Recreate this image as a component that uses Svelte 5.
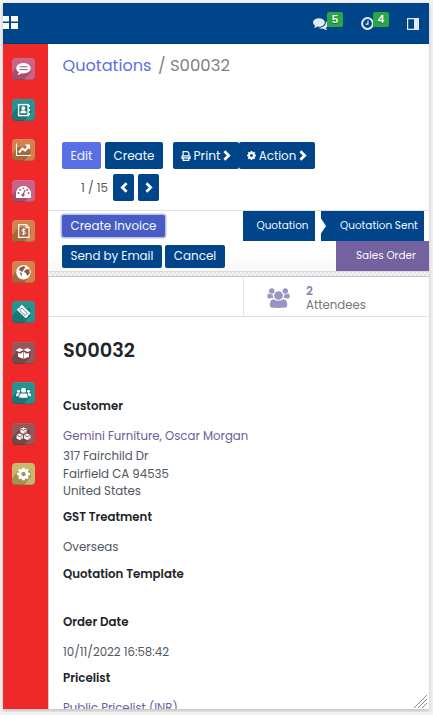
<script>
  // Sizes a label's type so that it takes up the given width.
  function fit(node, width) {
    const natural = node.getBoundingClientRect().width;
    const size = parseFloat(getComputedStyle(node).fontSize);
    node.style.fontSize = `${(size * width) / natural}px`;
  }

  const apps = [
    ['chat', 'pink'],
    ['contacts', 'teal'],
    ['chart', 'orange'],
    ['gauge', 'pink'],
    ['invoice', 'orange'],
    ['globe', 'orange'],
    ['ticket', 'teal'],
    ['box', 'plum'],
    ['people', 'teal'],
    ['cubes', 'plum'],
    ['gear', 'olive'],
  ];
  const gear =
    'M1152 896q0-106-75-181t-181-75-181 75-75 181 75 181 181 75 181-75 75-181zm512-109v222q0 12-8 23t-20 13l-185 28q-19 54-39 91 35 50 107 138 10 12 10 25t-9 23q-27 37-99 108t-94 71q-12 0-26-9l-138-108q-44 23-91 38-16 136-29 186-7 28-36 28h-222q-14 0-24.500-8.500t-11.500-21.500l-28-184q-49-16-90-37l-141 107q-10 9-25 9-14 0-25-11-126-114-165-168-7-10-7-23 0-12 8-23 15-21 51-66.500t54-70.500q-27-50-41-99l-183-27q-13-2-21-12.500t-8-23.500v-222q0-12 8-23t19-13l186-28q14-46 39-92-40-57-107-138-10-12-10-24 0-10 9-23 26-36 98.500-107.500t94.500-71.500q13 0 26 10l138 107q44-23 91-38 16-136 29-186 7-28 36-28h222q14 0 24.500 8.500t11.500 21.500l28 184q49 16 90 37l142-107q9-9 24-9 13 0 25 10 129 119 165 170 7 8 7 22 0 12-8 23-15 21-51 66.500t-54 70.500q26 50 41 98l183 28q13 2 21 12.500t8 23.500z';
  const comments =
    'M1408 768q0 139-94 257t-256.500 186.500-353.500 68.500q-86 0-176-16-124 88-278 128-36 9-86 16h-3q-11 0-20.500-8t-11.500-21q-1-3-1-6.500t.5-6.500 2-6l2.500-5 3.500-5.500 4-5 4.500-5 4-4.500q5-6 23-25t26-29.500 22.500-29 25-38.500 20.500-44q-124-72-195-177t-71-224q0-139 94-257t256.500-186.500 353.500-68.500 353.500 68.500 256.500 186.500 94 257zm384 256q0 120-71 224.500t-195 176.500q10 24 20.500 44t25 38.500 22.500 29 26 29.500 23 25q1 1 4 4.500t4.500 5 4 5 3.500 5.500l2.500 5 2 6 .5 6.500-1 6.500q-3 14-13 22t-22 7q-50-7-86-16-154-40-278-128-90 16-176 16-271 0-472-132 58 4 88 4 161 0 309-45t264-129q125-92 192-212t67-254q0-77-23-152 129 71 204 178t75 230z';
</script>

{#snippet chevron(left)}
  <svg class="chev" width="8" height="11" viewBox="0 0 8 11"><path d={left ? 'M6.600 1.200 2.300 5.500 6.600 9.800' : 'M1.400 1.200 5.700 5.500 1.400 9.800'} fill="none" stroke="#fff" stroke-width="2.700" /></svg>
{/snippet}

{#snippet glyph(name)}
  <svg width="23" height="22" viewBox="0 0 23 22" fill="#fff">
    <path d="M0 15 6 8 18 7 19 14 12 22H4Q0 22 0 18Z" fill="#000" opacity=".2" />
    {#if name === 'chat'}
      <path d="M11.500 5C7.500 5 4.300 7.300 4.300 10.200c0 1.700 1 3.200 2.700 4.100-.2 1-.8 1.800-1.700 2.400 1.800 0 3.300-.6 4.300-1.500q.9.200 1.900.2c4 0 7.200-2.300 7.200-5.200S15.500 5 11.500 5z" />
      <path d="M7.500 8.800h8M7.500 11.500h8" stroke="#a55374" stroke-width="1.100" />
    {:else if name === 'contacts'}
      <rect x="6.600" y="5.600" width="9.500" height="11" fill="none" stroke="#fff" stroke-width="1.400" />
      <circle cx="11.300" cy="9.200" r="1.900" /><path d="M8.200 14.200c0-2 1.200-3 3.100-3s3.100 1 3.100 3z" />
      <path d="M17.400 6v2M17.400 10v2M17.400 14v2" stroke="#fff" stroke-width="1.200" />
    {:else if name === 'chart'}
      <path d="M4.500 4.500v12h14.500" fill="none" stroke="#fff" stroke-width="1.100" />
      <path d="m7 13.500 3.500-4 2.500 2 3-3.400" fill="none" stroke="#fff" stroke-width="2" /><path d="M12.800 5.500h5.200v5.200z" />
    {:else if name === 'gauge'}
      <path d="M4 17v-3.500a7.500 7.500 0 0 1 15 0V17q0 1-1 1H5q-1 0-1-1z" />
      <path d="m11 15 2-5" stroke="#9b4b70" stroke-width="1.100" /><g fill="#9b4b70"><circle cx="11" cy="15" r="1.600" /><circle cx="6.500" cy="13" r=".9" /><circle cx="8" cy="9.900" r=".9" /><circle cx="11.500" cy="8.300" r=".8" /><circle cx="15.200" cy="9.900" r=".9" /><circle cx="16.600" cy="13" r=".9" /></g>
    {:else if name === 'invoice'}
      <path d="M6.700 4.600h7.500l2.800 2.800v9.900H6.700zM14 4.600v3h3" fill="none" stroke="#fff" stroke-width="1.200" />
      <path d="M13.600 9.300H11.200q-1.200 0-1.200 1.100t1.200 1.100h1q1.300 0 1.300 1.200T12.200 14H9.700M11.700 8.200v7" fill="none" stroke="#fff" stroke-width="1" />
    {:else if name === 'globe'}
      <circle cx="11.500" cy="11.300" r="7.300" />
      <path d="M8 6.500 12 5l1.500 1.500-1.800 1.700-.7 2.200-1.800.2-2.400-1.800zM13.500 8.500l4-.3.2 4-2.500 2.800-1.300-3-2-1zM7.500 11l2.500 1.200-.5 3.200z" fill="#8c5939" />
    {:else if name === 'ticket'}
      <path d="m9.800 3.800 8.900 8.500-1.200 1.300q-1.500.2-1.700 1.700l-2 2L4.700 8.800l1.600-1.600q1.700-.2 1.800-1.800z" />
      <path d="m9.800 7 5.600 5.300-2.200 2.300L7.600 9.300z" fill="none" stroke="#23736f" stroke-width=".8" />
    {:else if name === 'box'}
      <path d="m7.500 6 4 1.700L15.500 6l3.700 2.200-3.500 1.800-4.200-1.900-4.200 1.900-3.500-1.800zM6 11l2.300.7 2.900-1.900v7L6 14.700zM17 11l-2.300.7-2.900-1.900v7l5.200-2.100z" />
    {:else if name === 'people'}
      <circle cx="11.500" cy="8.200" r="2.500" /><path d="M7.400 15.700v-1.500q0-3 2.500-3 1.600 1 3.200 0 2.500 0 2.500 3v1.500z" />
      <circle cx="6.500" cy="9.300" r="1.500" /><circle cx="16.500" cy="9.300" r="1.500" /><path d="M4 14.300V13q0-2 2-2h1.500q-1 1-1 3.300zM19 14.300V13q0-2-2-2h-1.500q1 1 1 3.300z" />
    {:else if name === 'cubes'}
      <path d="m11.500 4.500 3 1.300v3.600l-3 1.400-3-1.400V5.800zM7.700 10.600l3.200 1.400v3.500L7.700 17l-3.100-1.500V12zM15.300 10.600l3.200 1.400v3.500L15.300 17l-3.200-1.500V12z" />
      <path d="m9 6.300 2.500 1 2.500-1M5.200 12.500l2.500 1 2.500-1M12.800 12.500l2.500 1 2.500-1M13 8.500v1.400M9.300 14.500v1.300M16.900 14.500v1.300" fill="none" stroke="#764547" stroke-width=".9" />
    {:else}
      <svg x="5" y="4.500" width="13" height="13" viewBox="128 128 1536 1536"><path d={gear} /></svg>
    {/if}
  </svg>
{/snippet}

<div class="window">
  <header>
    <svg class="grid" width="15" height="13"><path d="M0 0h6v5.600H0zM8 0h7v5.600H8zM0 7h6v6H0zM8 7h7v6H8z" fill="#fff" /></svg>
    <div class="tray">
      <svg width="15" height="15" viewBox="0 0 1792 1792"><path d={comments} fill="#e2eaf3" /></svg><b class="badge">5</b>
      <svg class="clock" width="13" height="13" viewBox="0 0 13 13"><circle cx="6.500" cy="6.500" r="5.400" fill="none" stroke="#e2eaf3" stroke-width="2" /><path d="M7 3.500v3.700H4.500" fill="none" stroke="#e2eaf3" stroke-width="1.200" /></svg><b class="badge">4</b>
      <svg class="panel" width="12" height="12"><path d="M.6.600h10.800v10.800H.6z" fill="none" stroke="#e2eaf3" stroke-width="1.200" /><path d="M7 0h5v12H7z" fill="#e2eaf3" /></svg>
    </div>
  </header>
  <div class="body">
    <nav>
      {#each apps as [name, tone]}
        <div class="app {tone}">{@render glyph(name)}</div>
      {/each}
    </nav>
    <main>
      <h2 class="crumbs"><a><span use:fit={89}>Quotations</span></a><i>/</i><span use:fit={60}>S00032</span></h2>
      <div class="toolbar">
        <button class="btn edit"><span use:fit={22}>Edit</span></button>
        <button class="btn create"><span use:fit={41}>Create</span></button>
        <button class="btn print"><svg width="10" height="10" viewBox="0 0 10 10"><path d="M2.100 5V.6h4.400l1.400 1.400v3M1 8V5.500q0-.6.700-.6h6.600q.7 0 .7.600V8M2.200 6.900h5.600v2.500H2.200z" fill="none" stroke="#fff" stroke-width="1.200" /></svg><span use:fit={27}>Print</span>{@render chevron(false)}</button>
        <button class="btn action"><svg width="9" height="9" viewBox="128 128 1536 1536"><path d={gear} fill="#fff" /></svg><span use:fit={37.5}>Action</span>{@render chevron(false)}</button>
      </div>
      <div class="pager"><span class="count"><span use:fit={27}>1 / 15</span></span><button class="btn arrow">{@render chevron(true)}</button><button class="btn arrow">{@render chevron(false)}</button></div>
      <section class="status">
        <div class="actions">
          <button class="btn invoice"><span use:fit={86}>Create Invoice</span></button>
          <div class="pair"><button class="btn email"><span use:fit={83}>Send by Email</span></button><button class="btn cancel"><span use:fit={42.500}>Cancel</span></button></div>
        </div>
        <div class="stages">
          <div class="line"><div class="stage first"><span use:fit={52}>Quotation</span></div><div class="stage sent"><span use:fit={78}>Quotation Sent</span></div></div>
          <div class="stage order"><span use:fit={60}>Sales Order</span></div>
        </div>
      </section>
      <div class="strip"></div>
      <div class="lower">
        <div class="stats">
          <div class="stat">
            <svg width="23" height="20" viewBox="0 0 23 20" fill="#9894c3"><circle cx="11.500" cy="7.500" r="4.300" /><circle cx="4.700" cy="3" r="2.700" /><circle cx="18.300" cy="3" r="2.700" /><path d="M4 19.500q-1.500-.6-1.200-3.200.4-4.800 3.900-5 4.800 3 9.600 0 3.500.2 3.900 5 .3 2.600-1.200 3.200-7.500.8-15 0zM.6 10q-.8-3.500.8-4.400 1.700 1 4.300.8-.2 2 .8 3.600H4.200Q2 11 .6 10zM22.400 10q.8-3.500-.8-4.400-1.700 1-4.300.8.200 2-.8 3.600h2.300q2.200 1 3.600 0z" /></svg>
            <div class="figure"><b>2</b><div><span use:fit={60}>Attendees</span></div></div>
          </div>
        </div>
        <article>
          <h1><span use:fit={72}>S00032</span></h1>
          <h3><span use:fit={60}>Customer</span></h3>
          <p class="link"><span use:fit={185.500}>Gemini Furniture, Oscar Morgan</span></p>
          <address><div><span use:fit={85.500}>317 Fairchild Dr</span></div><div><span use:fit={106}>Fairfield CA 94535</span></div><div><span use:fit={78}>United States</span></div></address>
          <h3 class="gst"><span use:fit={89}>GST Treatment</span></h3>
          <p><span use:fit={55.500}>Overseas</span></p>
          <h3 class="template"><span use:fit={121}>Quotation Template</span></h3>
          <h3 class="date"><span use:fit={65.500}>Order Date</span></h3>
          <p><span use:fit={106}>10/11/2022 16:58:42</span></p>
          <h3 class="price"><span use:fit={47.500}>Pricelist</span></h3>
          <p class="link"><span use:fit={115}>Public Pricelist (INR)</span></p>
        </article>
      </div>
      <svg class="grip" width="14" height="14"><path d="M0 13 13 0M4 13l9-9M8 13l5-5" stroke="#888" /></svg>
    </main>
  </div>
</div>

<style>
  :global(body) { background: #f1f1f1; }
  :global(#app) { display: flow-root; }
  .window { width: 426px; height: 706px; margin: 3px; overflow: hidden; background: #fff; box-shadow: 0 2px 4px #0003; font: 12px/18px Poppins, Inter, sans-serif; color: #50575e; display: flex; flex-direction: column; }
  span { white-space: pre; }
  header { height: 41px; flex: none; background: #00458a; border-bottom: 1px solid #003b78; box-sizing: border-box; display: flex; justify-content: space-between; }
  .grid { margin-top: 13px; }
  .tray { display: flex; width: 116px; align-items: flex-start; }
  .tray > svg { margin-top: 13px; flex: none; }
  .badge { width: 16px; height: 15px; margin: 9px 0 0 -1px; background: #28a745; color: #fff; border-radius: 2px; text-align: center; font-size: 10.500px; font-weight: 600; line-height: 15px; text-shadow: 0 1px 1px #0006; }
  .tray .clock { margin: 14px 0 0 18px; }
  .tray .panel { margin: 15px 0 0 18px; }
  .body { display: flex; flex: 1; min-height: 0; }
  nav { width: 45px; box-sizing: border-box; background: #ef292a; padding: 14px 9px; display: flex; flex-direction: column; gap: 18.500px; flex: none; }
  .app { width: 23px; height: 22px; flex: none; border-radius: 4px; overflow: hidden; box-shadow: inset 0 1px #fff1, inset 0 -1px #0002; }
  .app svg { display: block; }
  .pink { background: #ca6387; }
  .teal { background: #259391; }
  .orange { background: #d3824e; }
  .plum { background: #95585a; }
  .olive { background: #c8b86c; }
  main { flex: 1; min-width: 0; position: relative; overflow: hidden; display: flex; flex-direction: column; }
  .crumbs { margin: 0; height: 98px; flex: none; padding: 9px 0 0 14.500px; font-size: 16px; font-weight: 400; line-height: 25px; color: #7b7f83; display: flex; box-sizing: border-box; }
  .crumbs a { color: #5b70e5; }
  .crumbs i { font-style: normal; font-size: 16px; margin: 0 6px 0 6.500px; width: 6px; }
  .btn { font: inherit; border: 0; padding: 0; margin: 0; border-radius: 2px; background: #00458a; color: #f4f7fb; display: flex; align-items: center; justify-content: center; box-sizing: border-box; flex: none; height: 27px; }
  .toolbar { display: flex; padding-left: 14px; flex: none; }
  .edit { width: 39px; background: #586fe5; }
  .create { width: 58px; margin-left: 4px; }
  .print { width: 66px; margin-left: 10px; gap: 3px; }
  .action { width: 76px; gap: 3px; }
  .pager { display: flex; align-items: center; flex: none; height: 27px; margin-top: 5px; padding-left: 33px; }
  .count { width: 32px; }
  .arrow { width: 21px; margin-right: 4px; }
  .status { flex: none; margin-top: 9px; border-top: 1px solid #dee0e2; height: 61px; box-sizing: border-box; display: flex; justify-content: space-between; background: linear-gradient(#fff 70%, #f8f8fa); }
  .actions { padding: 4px 0 0 14px; }
  .invoice { width: 103px; height: 22px; background: #475cc5; box-shadow: 0 0 0 1.500px #b5bef1; }
  .pair { display: flex; gap: 3px; margin-top: 8px; }
  .email { width: 100px; height: 23px; padding-bottom: 1px; }
  .cancel { width: 60px; height: 23px; padding-bottom: 1px; }
  .stages { font-size: 11px; color: #f5f7fb; display: flex; flex-direction: column; align-items: flex-end; }
  .line { display: flex; padding-right: 5px; }
  .stage { height: 30px; background: #00458a; display: flex; align-items: center; box-sizing: border-box; }
  .first { width: 72px; padding-left: 13.500px; }
  .sent { width: 103px; margin-left: 6px; padding-left: 19px; clip-path: polygon(0 0, 100% 0, 100% 100%, 0 100%, 0 75%, 5px 50%, 0 25%); }
  .order { width: 93px; padding-left: 20px; background: #73629f; }
  .strip { height: 6px; flex: none; box-sizing: border-box; border-top: 1px solid #d9dade; border-bottom: 1px solid #c4c7d0; background: repeating-conic-gradient(#e3e3e3 0 25%, #f5f5f5 0 50%) 0 0 / 4px 4px; }
  .lower { flex: 1; min-height: 0; border-left: 1px solid #c9ccd4; }
  .stats { height: 39px; border-bottom: 1px solid #dee0e4; display: flex; justify-content: flex-end; }
  .stat { width: 186px; border-left: 1px solid #e2e4e7; display: flex; padding: 11px 0 0 23px; box-sizing: border-box; }
  .figure { margin: -4px 0 0 16px; line-height: 14px; color: #74777c; }
  .figure b { display: block; color: #8d83b8; font-weight: 600; }
  .figure div { height: 14px; }
  article { padding: 20px 14px 0; }
  h1 { margin: 0; height: 27px; font-size: 19px; line-height: 27px; font-weight: 600; color: #212529; }
  h3 { margin: 33px 0 0; height: 18px; font-size: 12px; line-height: 18px; font-weight: 600; color: #212529; }
  p { margin: 12px 0 0; height: 18px; line-height: 18px; }
  .link { color: #6d5c9c; }
  address { font-style: normal; line-height: 17.600px; margin-top: 2px; }
  address div { height: 17.600px; }
  .gst { margin-top: 8px; }
  .template { margin-top: 9px; }
  .date { margin-top: 30px; }
  .price { margin-top: 8px; }
  .grip { position: absolute; right: 1px; bottom: 0; }
</style>
